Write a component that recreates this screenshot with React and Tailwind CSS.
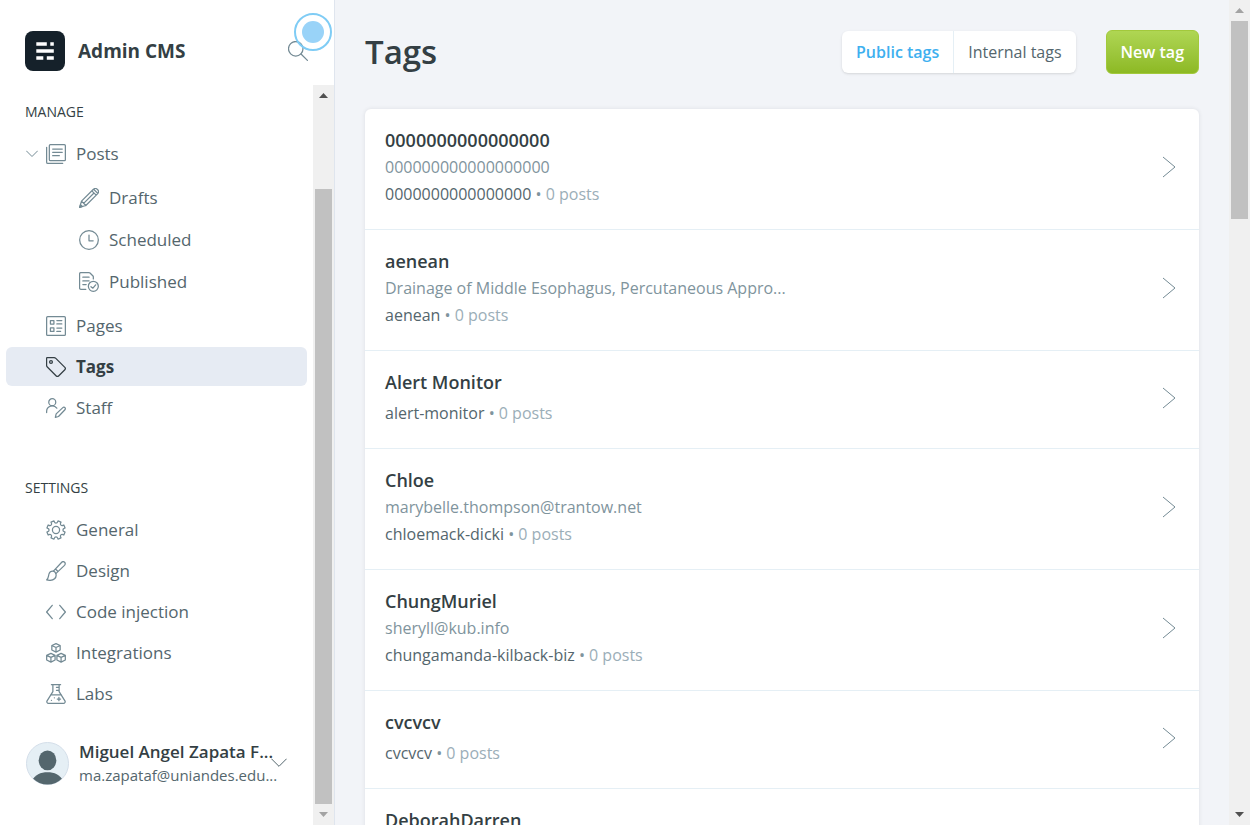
import React from "react";

function Icon({ children, className = "size-5 shrink-0 text-[#738a94]" }) {
  return (
    <svg
      viewBox="0 0 24 24"
      className={className}
      fill="none"
      stroke="currentColor"
      strokeWidth="1.5"
      strokeLinecap="round"
      strokeLinejoin="round"
      aria-hidden="true"
    >
      {children}
    </svg>
  );
}

const icons = {
  posts: (
    <>
      <rect x="4" y="0.75" width="19.25" height="19.25" rx="1.2" />
      <path d="M0.75 4v17.75a1.5 1.5 0 0 0 1.5 1.5H20M8 6h11.5M8 10h11.5M8 14h8" />
    </>
  ),
  drafts: (
    <>
      <path d="M22.2 1.8a3.7 3.7 0 0 0-5.2 0L3 15.8.75 23.25 8.2 21l14-14a3.7 3.7 0 0 0 0-5.2zM15.4 3.4l5.2 5.2M17.6 1.5l4.9 4.9M3 15.8 8.2 21M18 6 5.6 18.4" />
      <path d="M.8 23.2 1.8 20l2.2 2.2z" />
    </>
  ),
  scheduled: (
    <>
      <circle cx="12" cy="12" r="11.2" />
      <path d="M12 6v7h5" />
    </>
  ),
  published: (
    <>
      <circle cx="17.2" cy="17.2" r="6" />
      <path d="m20 15.4-3.3 4-2.3-1.8M8.2 20.7h-6a1.5 1.5 0 0 1-1.5-1.5V2.2A1.5 1.5 0 0 1 2.2.75H12c.5 0 .9.2 1.2.5l3.6 3.6c.3.3.4.6.4 1v2.4M4.6 6.2h7.5M4.6 10.7h7.5M4.6 15h4" />
    </>
  ),
  pages: (
    <>
      <rect x="0.75" y="0.75" width="22.5" height="22.5" rx="1.2" />
      <path d="M5.3 5.5h4.2v4.2H5.3zM5.3 14.3h4.2v4.2H5.3zM13 5.5h6M13 9.5h6M13 14.5h6M13 18.5h4.5" />
    </>
  ),
  tags: (
    <>
      <path d="M1.5.75h8.2c.8 0 1.5.3 2.1.9l10.8 10.8a2 2 0 0 1 0 2.8l-7.5 7.5a2 2 0 0 1-2.8 0L1.6 12a3 3 0 0 1-.9-2.1V1.5c0-.4.4-.75.8-.75z" />
      <circle cx="6" cy="6" r="1.7" />
    </>
  ),
  staff: (
    <>
      <circle cx="7.5" cy="5" r="4.2" />
      <path d="M.75 17.5V16.2a6.75 6.75 0 0 1 12.2-4M11.2 23.25l1-4.2 8-7.5c.8-.7 1.9-.6 2.5.1s.6 1.8 0 2.4L15 22.2z" />
    </>
  ),
  general: (
    <>
      <path d="M10 2.2a2.1 2.1 0 0 0 4 0l.4-1.1 3.6 1.5-.5 1.1a2.1 2.1 0 0 0 2.8 2.8l1.1-.5 1.5 3.6-1.1.4a2.1 2.1 0 0 0 0 4l1.1.4-1.5 3.6-1.1-.5a2.1 2.1 0 0 0-2.8 2.8l.5 1.1-3.6 1.5-.4-1.1a2.1 2.1 0 0 0-4 0l-.4 1.1L6 21.4l.5-1.1a2.1 2.1 0 0 0-2.8-2.8l-1.1.5-1.5-3.6 1.1-.4a2.1 2.1 0 0 0 0-4l-1.1-.4L2.6 6l1.1.5a2.1 2.1 0 0 0 2.8-2.8L6 2.6l3.6-1.5z" />
      <circle cx="12" cy="12" r="4.3" />
    </>
  ),
  design: (
    <>
      <path d="M8.900 12.200 18.600 1.800c1-1.100 2.600-1.300 3.700-.3s1 2.700-.1 3.800L11.800 15.100M11.400 9.600l3 3" />
      <path d="M8.900 12.200c-2.300-.3-4.500.9-5.300 3.200-.9 2.700-.2 4.600-2.850 7.300 3.500.9 7.300.7 9.550-1.400 1.700-1.600 2.200-4.100 1.500-6.200a5 5 0 0 0-2.900-2.900z" />
    </>
  ),
  code: <path d="M7.500 4 .75 12l6.750 8M16.500 4l6.750 8-6.750 8" />,
  integrations: (
    <>
      <path d="m12 .75 5 2.300v5.400l-5 2.500-5-2.500V3.050zM7 3.050l5 2.400 5-2.400M12 5.450v5.500" />
      <path d="m5.900 12.500 5 2.300v5.600l-5 2.500-5.100-2.500v-5.600zM.8 14.800l5.100 2.400 5-2.400M5.900 17.200v5.700" />
      <path d="m18.100 12.500 5.100 2.300v5.600l-5.100 2.500-5-2.500v-5.600zM13.100 14.800l5 2.400 5.100-2.400M18.100 17.200v5.700" />
    </>
  ),
  labs: (
    <>
      <path d="M6.500.75h11M8.250.75v8.500L1.300 20.200a2 2 0 0 0 1.700 3.050h18a2 2 0 0 0 1.700-3.050L15.750 9.250V.75M5.500 13h13M12.500 4h3M12.500 7.500h3" />
      <path d="M15.500 16v4M13.500 18h4M6.500 19.500h.1M10 16.500h.1" />
    </>
  ),
};

const postViews = [
  { label: "Drafts", icon: "drafts" },
  { label: "Scheduled", icon: "scheduled" },
  { label: "Published", icon: "published" },
];

const manage = [
  { label: "Pages", icon: "pages" },
  { label: "Tags", icon: "tags", active: true },
  { label: "Staff", icon: "staff" },
];

const settings = [
  { label: "General", icon: "general" },
  { label: "Design", icon: "design" },
  { label: "Code injection", icon: "code" },
  { label: "Integrations", icon: "integrations" },
  { label: "Labs", icon: "labs" },
];

const tags = [
  { name: "0000000000000000", description: "000000000000000000", slug: "0000000000000000" },
  { name: "aenean", description: "Drainage of Middle Esophagus, Percutaneous Appro...", slug: "aenean" },
  { name: "Alert Monitor", slug: "alert-monitor" },
  { name: "Chloe", description: "marybelle.thompson@trantow.net", slug: "chloemack-dicki" },
  { name: "ChungMuriel", description: "sheryll@kub.info", slug: "chungamanda-kilback-biz" },
  { name: "cvcvcv", slug: "cvcvcv" },
  { name: "DeborahDarren", slug: "deborahdarren" },
];

function NavItem({ label, icon, active, sub }) {
  return (
    <li>
      <a
        href="#"
        aria-current={active ? "page" : undefined}
        className={
          "flex h-[39px] items-center gap-2.5 rounded-md text-[17px] " +
          (sub ? "pl-[73px] " : "pl-10 ") +
          (active ? "bg-[#e6ebf3] font-bold text-[#343f44]" : "text-[#54666d]")
        }
      >
        <Icon className={active ? "size-5 shrink-0 text-[#343f44]" : "size-5 shrink-0 text-[#738a94]"}>
          {icons[icon]}
        </Icon>
        {label}
      </a>
    </li>
  );
}

function Scrollbar({ thumb, upColor, downColor }) {
  return (
    <div aria-hidden="true" className="flex w-[21px] shrink-0 flex-col items-center bg-[#f0f0f0]">
      <svg viewBox="0 0 9 5" className={"my-2 h-[5px] w-[9px] shrink-0 " + upColor} fill="currentColor">
        <path d="M0 5 4.500 0 9 5z" />
      </svg>
      <div className={"w-[17px] bg-[#c1c1c1] " + thumb} />
      <svg viewBox="0 0 9 5" className={"mt-auto mb-2 h-[5px] w-[9px] shrink-0 " + downColor} fill="currentColor">
        <path d="M0 0h9L4.500 5z" />
      </svg>
    </div>
  );
}

function Sidebar() {
  return (
    <aside className="flex w-[335px] shrink-0 flex-col border-r border-[#dfe5ee] bg-white">
      <header className="relative flex h-[85px] shrink-0 items-center gap-[13px] pt-[17px] pr-[26px] pl-[25px]">
        <svg viewBox="0 0 40 40" className="size-10 shrink-0" aria-hidden="true">
          <rect width="40" height="40" rx="8" fill="#15212a" />
          <path
            fill="#fff"
            d="M11.300 11.300h10.500v3.500H11.300zM25.300 11.300h3.500v3.500h-3.500zM11.300 18.300h17.500v3.500H11.300zM11.300 25.300h7v3.500h-7zM21.800 25.300h7v3.500h-7z"
          />
        </svg>
        <span className="grow text-[19px] font-bold text-[#343f44]">Admin CMS</span>
        <button type="button" aria-label="Search" className="text-[#738a94]">
          <Icon className="size-5">
            <circle cx="9.300" cy="9.300" r="8.700" />
            <path d="m15.600 15.600 7.700 7.700" />
          </Icon>
        </button>
        <span className="absolute top-[13px] right-[2px] flex size-[38px] items-center justify-center rounded-full border-2 border-[#7fccf5]">
          <span className="size-[22px] rounded-full bg-[#99d3f8]" />
        </span>
      </header>

      <div className="flex min-h-0 grow">
        <div className="flex min-w-0 grow flex-col overflow-hidden px-1.5 pb-[39px]">
          <nav className="pt-[17px]">
            <h2 className="pl-[19px] text-sm leading-5 text-[#343f44]">MANAGE</h2>
            <ul className="mt-3 flex flex-col gap-0.5">
              <li>
                <div className="flex h-[39px] items-center pl-5">
                  <button type="button" aria-label="Collapse posts" className="mr-2 text-[#738a94]">
                    <Icon className="size-3">
                      <path strokeWidth="2" d="m1 6 11 11L23 6" />
                    </Icon>
                  </button>
                  <a href="#" className="flex items-center gap-2.5 text-[17px] text-[#54666d]">
                    <Icon>{icons.posts}</Icon>
                    Posts
                  </a>
                </div>
                <ul className="mt-[5px] mb-[3px] flex flex-col gap-[3px]">
                  {postViews.map((item) => (
                    <NavItem key={item.label} {...item} sub />
                  ))}
                </ul>
              </li>
              {manage.map((item) => (
                <NavItem key={item.label} {...item} />
              ))}
            </ul>

            <h2 className="mt-[51px] pl-[19px] text-sm leading-5 text-[#343f44]">SETTINGS</h2>
            <ul className="mt-3 flex flex-col gap-0.5">
              {settings.map((item) => (
                <NavItem key={item.label} {...item} />
              ))}
            </ul>
          </nav>

          <button type="button" className="mt-auto flex items-center pl-5 text-left">
            <svg viewBox="0 0 44 44" className="size-[43px] shrink-0" aria-hidden="true">
              <clipPath id="avatar-clip">
                <circle cx="22" cy="22" r="21.500" />
              </clipPath>
              <circle cx="22" cy="22" r="21.500" fill="#e5eff5" stroke="#d3dde8" />
              <g clipPath="url(#avatar-clip)" fill="#54666d">
                <ellipse cx="22" cy="18.800" rx="9" ry="10.200" />
                <path d="M6 40c3-6.500 9-9 16-9s13 2.500 16 9v4H6z" />
              </g>
            </svg>
            <span className="ml-2.5 flex flex-col whitespace-nowrap">
              <span className="text-[17px] leading-6 font-semibold text-[#343f44]">Miguel Angel Zapata F...</span>
              <span className="text-[15px] leading-[22px] text-[#54666d]">ma.zapataf@uniandes.edu...</span>
            </span>
            <Icon className="-ml-1.5 size-4 shrink-0 text-[#54666d]">
              <path d="m1 6 11 11L23 6" />
            </Icon>
          </button>
        </div>
        <Scrollbar thumb="mt-[83px] h-[615px]" upColor="text-[#505050]" downColor="text-[#a3a3a3]" />
      </div>
    </aside>
  );
}

function TagRow({ name, description, slug }) {
  return (
    <li className="border-b border-[#e5eff5] last:border-b-0">
      <a href="#" className="flex items-center justify-between pt-[18px] pr-[23px] pb-[22px] pl-5">
        <div>
          <h3 className="text-lg leading-[26px] font-semibold text-[#343f44]">{name}</h3>
          {description && <p className="text-base leading-7 text-[#7f949d]">{description}</p>}
          <p className={"text-base leading-[26px] text-[#54666d] " + (description ? "" : "mt-[5px]")}>
            {slug} <span className="text-[#7f949d]">•</span> <span className="text-[#9baeb8]">0 posts</span>
          </p>
        </div>
        <svg
          viewBox="0 0 14 22"
          className="h-[22px] w-3.5 shrink-0 text-[#738a94]"
          fill="none"
          stroke="currentColor"
          strokeWidth="1"
          aria-hidden="true"
        >
          <path d="m1 1 12 10L1 21" />
        </svg>
      </a>
    </li>
  );
}

export default function App() {
  return (
    <div className="flex h-screen overflow-hidden bg-[#f2f4f8] font-['Open_Sans','Noto_Sans',sans-serif]">
      <Sidebar />
      <main className="min-w-0 grow overflow-hidden px-[30px] pt-[30px]">
        <header className="flex items-center justify-between">
          <h1 className="text-[33px] leading-[44px] font-semibold text-[#343f44]">Tags</h1>
          <div className="flex items-center gap-[30px]">
            <div className="flex rounded-md bg-white text-base leading-[42px] shadow-sm">
              <button type="button" className="border-r border-[#e5eff5] px-3.5 font-semibold text-[#3eb0ef]">
                Public tags
              </button>
              <button type="button" className="px-3.5 text-[#54666d]">
                Internal tags
              </button>
            </div>
            <a
              href="#"
              className="rounded-md border border-[#a2c93c] bg-linear-to-b from-[#afd653] to-[#8db923] px-3.5 text-base leading-[42px] font-semibold text-white"
            >
              New tag
            </a>
          </div>
        </header>
        <ul className="mt-[35px] rounded-md bg-white shadow-[0_0_4px_rgba(39,44,49,0.1)]">
          {tags.map((tag) => (
            <TagRow key={tag.name} {...tag} />
          ))}
        </ul>
      </main>
      <Scrollbar thumb="h-[198px]" upColor="text-[#a3a3a3]" downColor="text-[#505050]" />
    </div>
  );
}
